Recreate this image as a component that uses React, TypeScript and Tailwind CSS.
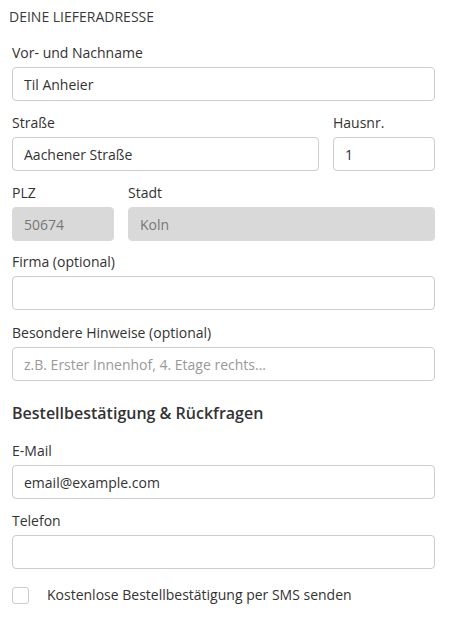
import React from "react";

const inputBase =
  "block w-full h-[34px] rounded-[4px] border px-[11px] text-[14px] outline-none placeholder:text-[#999]";

function Field({
  label,
  value,
  placeholder,
  disabled,
  className = "",
}: {
  label: string;
  value?: string;
  placeholder?: string;
  disabled?: boolean;
  className?: string;
}) {
  return (
    <div className={className}>
      <label className="block h-[20px] mb-[4px] text-[14px] leading-[20px] text-[#333]">{label}</label>
      <input
        className={
          inputBase +
          (disabled
            ? " bg-[#d9d9d9] border-[#d9d9d9] text-[#777]"
            : " bg-white border-[#cccccc] text-[#333]")
        }
        defaultValue={value}
        placeholder={placeholder}
        disabled={disabled}
      />
    </div>
  );
}

export default function App() {
  return (
    <div
      className="w-[456px] h-[621px] bg-white text-[#333]"
      style={{ fontFamily: '"Open Sans", sans-serif' }}
    >
      <div className="pl-[9px] pt-[7px] text-[14px] leading-[20px] uppercase text-[#3a3a3a]">Deine Lieferadresse</div>
      <div className="pl-[12px] pr-[21px] pt-[16px]">
        <Field label="Vor- und Nachname" value="Til Anheier" className="mb-[12px]" />
        <div className="flex gap-[14px] mb-[12px]">
          <Field label="Straße" value="Aachener Straße" className="flex-1" />
          <Field label="Hausnr." value="1" className="w-[102px]" />
        </div>
        <div className="flex gap-[14px] mb-[11px]">
          <Field label="PLZ" value="50674" disabled className="w-[102px]" />
          <Field label="Stadt" value="Koln" disabled className="flex-1" />
        </div>
        <Field label="Firma (optional)" className="mb-[13px]" />
        <Field
          label="Besondere Hinweise (optional)"
          placeholder="z.B. Erster Innenhof, 4. Etage rechts..."
          className="mb-[20px]"
        />
        <h2 className="text-[16px] leading-[24px] font-semibold mb-[16px]">Bestellbestätigung &amp; Rückfragen</h2>
        <Field label="E-Mail" value="email@example.com" className="mb-[12px]" />
        <Field label="Telefon" className="mb-[16px]" />
        <label className="flex items-center">
          <span className="block w-[17px] h-[17px] rounded-[3px] border border-[#cccccc] bg-white" />
          <span className="ml-[18px] text-[14px] leading-[20px]">Kostenlose Bestellbestätigung per SMS senden</span>
        </label>
      </div>
    </div>
  );
}
